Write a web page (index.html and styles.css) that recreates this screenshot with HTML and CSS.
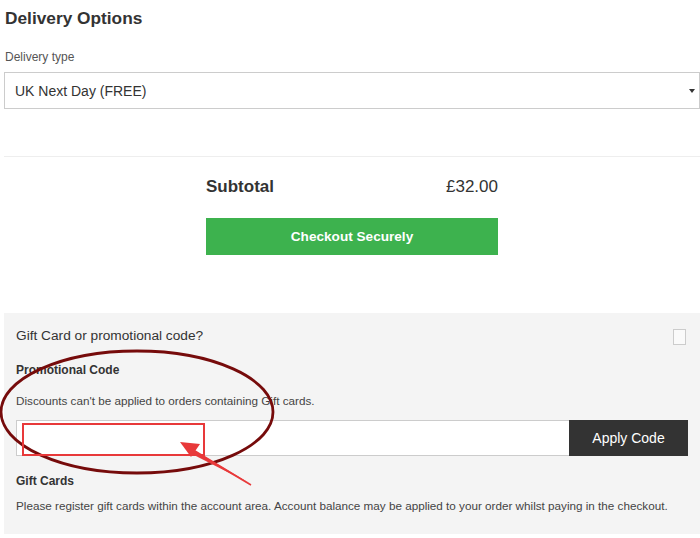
FILE: index.html
```html
<!DOCTYPE html>
<html lang="en">
<head>
  <meta charset="UTF-8">
  <title>Delivery Options</title>
  <link rel="stylesheet" href="styles.css">
</head>
<body>
  <div class="container">
    <section class="delivery">
      <h2>Delivery Options</h2>
      <label for="deliveryType">Delivery type</label>
      <div class="select-wrap">
        <select id="deliveryType">
          <option>UK Next Day (FREE)</option>
        </select>
      </div>
    </section>

    <section class="summary">
      <div class="subtotal">
        <span class="subtotal-label">Subtotal</span>
        <span class="subtotal-value">£32.00</span>
      </div>
      <button class="checkout">Checkout Securely</button>
    </section>

    <section class="codes">
      <div class="codes-head">
        <span>Gift Card or promotional code?</span>
        <span class="checkbox"></span>
      </div>
      <h4>Promotional Code</h4>
      <p>Discounts can't be applied to orders containing Gift cards.</p>
      <div class="code-row">
        <input type="text" class="code-input">
        <button class="apply">Apply Code</button>
      </div>
      <h4>Gift Cards</h4>
      <p class="gift-note">Please register gift cards within the account area. Account balance may be applied to your order whilst paying in the checkout.</p>
    </section>
  </div>

  <svg class="marks" width="700" height="538" viewBox="0 0 700 538">
    <ellipse cx="137" cy="412" rx="136" ry="61" fill="none" stroke="#760b0b" stroke-width="2.8"/>
    <rect x="23" y="424" width="181" height="31" fill="none" stroke="#e8393a" stroke-width="2"/>
    <polygon points="251,484 190,447 188,452" fill="#e8393a"/>
    <line x1="251" y1="485" x2="192" y2="450" stroke="#e8393a" stroke-width="1.5"/>
    <polygon points="180,442 200,444 191,457" fill="#e8393a"/>
  </svg>
</body>
</html>
```

FILE: styles.css
```css
body {
  margin: 0;
  font-family: 'Liberation Sans', Arial, sans-serif;
  color: #333;
  background: #fff;
}

.container {
  padding-left: 4px;
}

.delivery h2 {
  font-size: 17.3px;
  margin: 0;
  padding: 8px 0 0 1px;
  line-height: 20px;
  color: #333;
}

.delivery label {
  display: block;
  font-size: 12px;
  color: #555;
  margin: 22px 0 0 1px;
  line-height: 14px;
}

.select-wrap {
  position: relative;
  margin-top: 8px;
}

.select-wrap::after {
  content: "";
  position: absolute;
  right: 5px;
  top: 17px;
  border-left: 3px solid transparent;
  border-right: 3px solid transparent;
  border-top: 4px solid #333;
}

select {
  appearance: none;
  -webkit-appearance: none;
  display: block;
  width: 100%;
  height: 37px;
  padding: 0 10px;
  font-family: inherit;
  font-size: 14px;
  color: #333;
  border: 1px solid #ccc;
  border-radius: 0;
  background: #fff;
}

.summary {
  border-top: 1px solid #eee;
  margin-top: 47px;
  padding-top: 20px;
  height: 136px;
}

.subtotal {
  width: 292px;
  margin: 0 auto;
  display: flex;
  justify-content: space-between;
  font-size: 17px;
  line-height: 20px;
}

.subtotal-label {
  font-weight: bold;
}

.checkout {
  display: block;
  width: 292px;
  height: 37px;
  margin: 21px auto 0;
  border: 0;
  background: #3db24e;
  color: #fff;
  font-family: inherit;
  font-size: 13.6px;
  font-weight: bold;
  cursor: pointer;
}

.codes {
  background: #f4f4f4;
  padding: 13px 12px 21px;
  font-size: 11.7px;
  color: #444;
}

.codes-head {
  display: flex;
  justify-content: space-between;
  align-items: center;
  font-size: 13.7px;
  color: #333;
  padding-right: 2px;
}

.checkbox {
  width: 11px;
  height: 14px;
  border: 1px solid #ccc;
  background: #fafafa;
  margin-top: 3px;
}

.codes h4 {
  font-size: 12px;
  margin: 18px 0 0;
  color: #333;
  line-height: 14px;
}

.codes p {
  margin: 17px 0 0;
  line-height: 14px;
}

.codes .gift-note {
  margin-top: 11px;
}

.code-row {
  display: flex;
  margin-top: 12px;
}

.code-input {
  flex: 1;
  height: 36px;
  box-sizing: border-box;
  border: 1px solid #ccc;
  border-right: 0;
  background: #fff;
}

.apply {
  width: 119px;
  height: 36px;
  border: 0;
  background: #333;
  color: #fff;
  font-family: inherit;
  font-size: 14px;
}

.marks {
  position: absolute;
  left: 0;
  top: 0;
  pointer-events: none;
}
```
